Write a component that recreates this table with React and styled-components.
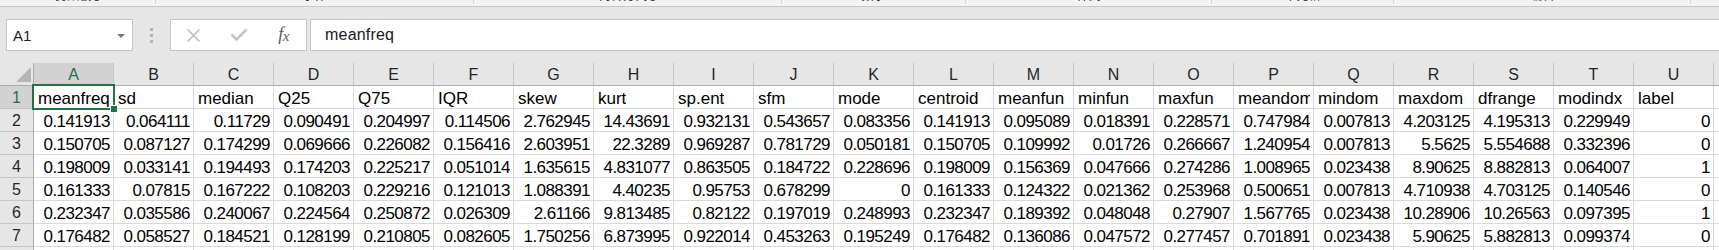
import React from 'react';
import styled, { createGlobalStyle, css } from 'styled-components';

const GlobalStyle = createGlobalStyle`
  html, body { margin: 0; padding: 0; background: #ffffff; }
  body { font-family: "Liberation Sans", "Noto Sans CJK SC", sans-serif; }
  #root { width: 1719px; height: 250px; overflow: hidden; }
`;

const Window = styled.div`
  width: 1719px;
  height: 250px;
  overflow: hidden;
  display: flex;
  flex-direction: column;
  background: #ffffff;
`;

/* ---------- ribbon remnant ---------- */
const RibbonStrip = styled.div`
  height: 6px;
  display: flex;
  background: #f3f3f3;
  overflow: hidden;
  flex-shrink: 0;
`;

const RibbonGroup = styled.div`
  width: ${(p) => p.$w}px;
  flex-shrink: 0;
  display: flex;
  justify-content: center;
  align-items: flex-start;
  border-right: 1px solid #d6d6d6;
  box-sizing: border-box;
  height: 4px;
  overflow: hidden;
`;

const GroupLabel = styled.span`
  font-family: "Noto Sans CJK SC", sans-serif;
  font-size: 12px;
  line-height: 16px;
  margin-top: -13px;
  color: #262626;
  white-space: nowrap;
`;

/* ---------- formula bar ---------- */
const FormulaBar = styled.div`
  height: 57px;
  box-sizing: border-box;
  flex-shrink: 0;
  border-top: 1px solid #c8c8c8;
  background: #e6e6e6;
  display: flex;
  align-items: flex-start;
  padding: 12px 0 0 6px;
`;

const BarBox = styled.div`
  height: 32px;
  box-sizing: border-box;
  border: 1px solid #c6c6c6;
  background: #ffffff;
  flex-shrink: 0;
`;

const NameBox = styled(BarBox)`
  width: 127px;
  display: flex;
  align-items: center;
  justify-content: space-between;
  padding: 0 7px 0 6px;
`;

const NameText = styled.span`
  font-size: 15px;
  color: #1e1e1e;
`;

const Caret = styled.span`
  width: 0;
  height: 0;
  border-left: 4px solid transparent;
  border-right: 4px solid transparent;
  border-top: 4px solid #7a7a7a;
  margin-top: 1px;
`;

const Grip = styled.div`
  width: 37px;
  height: 32px;
  flex-shrink: 0;
  display: flex;
  flex-direction: column;
  align-items: center;
  justify-content: center;
  gap: 3px;
`;

const GripDot = styled.span`
  width: 3px;
  height: 3px;
  background: #b4b4b4;
`;

const FxButtons = styled(BarBox)`
  width: 137px;
  display: grid;
  grid-template-columns: 45px 45px 45px;
  align-items: center;
  justify-items: center;
  margin-right: 3px;
`;

const FxLabel = styled.span`
  font-family: "Liberation Serif", serif;
  font-style: italic;
  font-size: 18px;
  color: #5b5b5b;
  letter-spacing: -0.5px;
  margin-top: -1px;
`;

const FxSub = styled.span`
  font-size: 15px;
  position: relative;
  top: 1px;
`;

const FormulaInput = styled(BarBox)`
  flex: 1;
  border-right: none;
  display: flex;
  align-items: center;
  padding-left: 14px;
  font-size: 16px;
  color: #1a1a1a;
  letter-spacing: 0.2px;
`;

/* ---------- sheet ---------- */
const Sheet = styled.div`
  flex: 1;
  display: grid;
  grid-template-columns: 34px repeat(22, 80px);
  grid-template-rows: 23px;
  grid-auto-rows: 23px;
  overflow: hidden;
  font-size: 17px;
`;

const headerBase = css`
  box-sizing: border-box;
  background: #e6e6e6;
  display: flex;
  align-items: center;
  justify-content: center;
  color: #262626;
  font-size: 16px;
`;

const Corner = styled.div`
  ${headerBase};
  border-right: 1px solid #ababab;
  border-bottom: 1px solid #ababab;
  align-items: flex-end;
  justify-content: flex-end;
  padding: 0 2px 3px 0;
`;

const ColHeader = styled.div`
  ${headerBase};
  border-right: 1px solid #c6c6c6;
  border-bottom: 1px solid #ababab;
  padding-top: 1px;
  ${(p) =>
    p.$active &&
    css`
      background: #d2d2d2;
      color: #217346;
    `}
`;

const RowHeader = styled.div`
  ${headerBase};
  border-right: 1px solid #ababab;
  border-bottom: 1px solid #c6c6c6;
  padding-top: 2px;
  ${(p) =>
    p.$active &&
    css`
      background: #d2d2d2;
      color: #217346;
    `}
`;

const Cell = styled.div`
  box-sizing: border-box;
  border-right: 1px solid #d9d9d9;
  border-bottom: 1px solid #d9d9d9;
  position: relative;
  display: flex;
  align-items: flex-end;
  justify-content: ${(p) => (p.$num ? 'flex-end' : 'flex-start')};
  padding: 0 3px 0 4px;
  color: #000000;
  min-width: 0;
`;

const CellText = styled.span`
  display: block;
  white-space: nowrap;
  overflow: hidden;
  line-height: 19px;
  letter-spacing: ${(p) => (p.$num ? '-0.55px' : '0px')};
`;

const Selection = styled.div`
  position: absolute;
  top: -2px;
  left: -2px;
  right: -2px;
  bottom: -2px;
  border: 2px solid #217346;
  pointer-events: none;
  z-index: 2;
`;

const Handle = styled.span`
  position: absolute;
  right: -5px;
  bottom: -5px;
  width: 6px;
  height: 6px;
  background: #217346;
  border: 1px solid #ffffff;
`;

/* ---------- data ---------- */
const ribbonGroups = [
  { w: 156, label: '剪贴板 ⌟' },
  { w: 318, label: '字体' },
  { w: 308, label: '对齐方式 ⌟' },
  { w: 184, label: '数字' },
  { w: 246, label: '样式' },
  { w: 182, label: '单元格' },
  { w: 297, label: '编辑' },
  { w: 40, label: '' },
];

const letters = 'ABCDEFGHIJKLMNOPQRSTUV'.split('');

const headers = [
  'meanfreq', 'sd', 'median', 'Q25', 'Q75', 'IQR', 'skew', 'kurt', 'sp.ent', 'sfm', 'mode',
  'centroid', 'meanfun', 'minfun', 'maxfun', 'meandom', 'mindom', 'maxdom', 'dfrange', 'modindx', 'label',
];

const rows = [
  ['0.141913', '0.064111', '0.11729', '0.090491', '0.204997', '0.114506', '2.762945', '14.43691', '0.932131', '0.543657', '0.083356', '0.141913', '0.095089', '0.018391', '0.228571', '0.747984', '0.007813', '4.203125', '4.195313', '0.229949', '0'],
  ['0.150705', '0.087127', '0.174299', '0.069666', '0.226082', '0.156416', '2.603951', '22.3289', '0.969287', '0.781729', '0.050181', '0.150705', '0.109992', '0.01726', '0.266667', '1.240954', '0.007813', '5.5625', '5.554688', '0.332396', '0'],
  ['0.198009', '0.033141', '0.194493', '0.174203', '0.225217', '0.051014', '1.635615', '4.831077', '0.863505', '0.184722', '0.228696', '0.198009', '0.156369', '0.047666', '0.274286', '1.008965', '0.023438', '8.90625', '8.882813', '0.064007', '1'],
  ['0.161333', '0.07815', '0.167222', '0.108203', '0.229216', '0.121013', '1.088391', '4.40235', '0.95753', '0.678299', '0', '0.161333', '0.124322', '0.021362', '0.253968', '0.500651', '0.007813', '4.710938', '4.703125', '0.140546', '0'],
  ['0.232347', '0.035586', '0.240067', '0.224564', '0.250872', '0.026309', '2.61166', '9.813485', '0.82122', '0.197019', '0.248993', '0.232347', '0.189392', '0.048048', '0.27907', '1.567765', '0.023438', '10.28906', '10.26563', '0.097395', '1'],
  ['0.176482', '0.058527', '0.184521', '0.128199', '0.210805', '0.082605', '1.750256', '6.873995', '0.922014', '0.453263', '0.195249', '0.176482', '0.136086', '0.047572', '0.277457', '0.701891', '0.023438', '5.90625', '5.882813', '0.099374', '0'],
  new Array(21).fill(''),
];

const CloseIcon = () => (
  <svg width="15" height="15" viewBox="0 0 15 15">
    <path d="M1.5 1.5 L13.5 13.5 M13.5 1.5 L1.5 13.5" stroke="#bcbcbc" strokeWidth="1.5" fill="none" />
  </svg>
);

const CheckIcon = () => (
  <svg width="18" height="14" viewBox="0 0 18 14">
    <path d="M1.5 6.5 L6.5 11.5 L16.5 1.5" stroke="#c3c3c3" strokeWidth="2.6" fill="none" />
  </svg>
);

const CornerTriangle = () => (
  <svg width="15" height="15" viewBox="0 0 15 15">
    <path d="M15 0 L15 15 L0 15 Z" fill="#b6b6b6" />
  </svg>
);

export default function App() {
  return (
    <>
      <GlobalStyle />
      <Window>
        <RibbonStrip>
          {ribbonGroups.map((g, i) => (
            <RibbonGroup key={i} $w={g.w}>
              <GroupLabel>{g.label}</GroupLabel>
            </RibbonGroup>
          ))}
        </RibbonStrip>

        <FormulaBar>
          <NameBox>
            <NameText>A1</NameText>
            <Caret />
          </NameBox>
          <Grip>
            <GripDot />
            <GripDot />
            <GripDot />
          </Grip>
          <FxButtons>
            <CloseIcon />
            <CheckIcon />
            <FxLabel>
              f<FxSub>x</FxSub>
            </FxLabel>
          </FxButtons>
          <FormulaInput>meanfreq</FormulaInput>
        </FormulaBar>

        <Sheet>
          <Corner>
            <CornerTriangle />
          </Corner>
          {letters.map((l, i) => (
            <ColHeader key={l} $active={i === 0}>
              {l}
            </ColHeader>
          ))}

          <RowHeader $active>1</RowHeader>
          {headers.map((h, i) => (
            <Cell key={h}>
              <CellText>{h}</CellText>
              {i === 0 && (
                <Selection>
                  <Handle />
                </Selection>
              )}
            </Cell>
          ))}
          <Cell />

          {rows.map((r, ri) => (
            <React.Fragment key={ri}>
              <RowHeader>{ri + 2}</RowHeader>
              {r.map((v, ci) => (
                <Cell key={ci} $num>
                  <CellText $num>{v}</CellText>
                </Cell>
              ))}
              <Cell />
            </React.Fragment>
          ))}
        </Sheet>
      </Window>
    </>
  );
}
